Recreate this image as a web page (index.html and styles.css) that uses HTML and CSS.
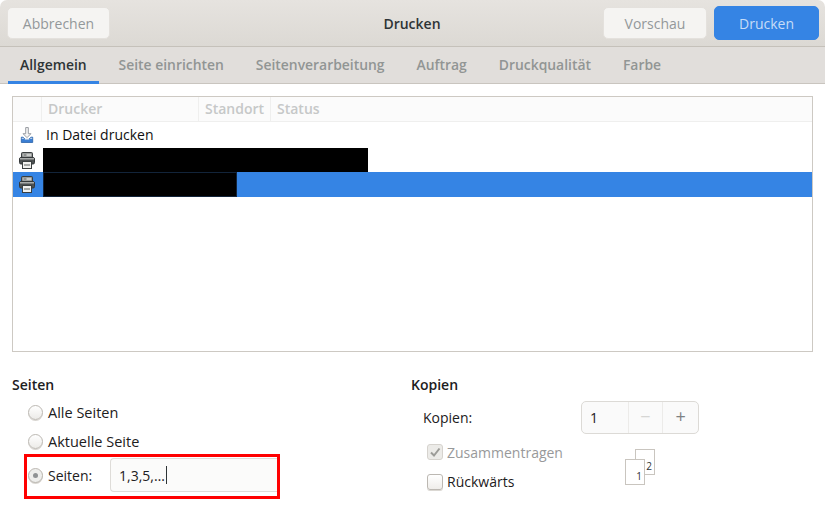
FILE: index.html
```html
<!DOCTYPE html>
<html lang="de">
<head>
<meta charset="utf-8">
<title>Drucken</title>
<link rel="stylesheet" href="styles.css">
</head>
<body>
<div class="window">
  <header class="header">
    <div class="header-left"><button class="btn btn-cancel">Abbrechen</button></div>
    <div class="title">Drucken</div>
    <div class="header-right">
      <button class="btn btn-preview">Vorschau</button>
      <button class="btn btn-print">Drucken</button>
    </div>
  </header>
  <nav class="tabs">
    <div class="tab active">Allgemein</div>
    <div class="tab">Seite einrichten</div>
    <div class="tab">Seitenverarbeitung</div>
    <div class="tab">Auftrag</div>
    <div class="tab">Druckqualität</div>
    <div class="tab">Farbe</div>
  </nav>
  <main class="content">
    <section class="list">
      <div class="list-head">
        <div class="col col-icon"></div>
        <div class="col col-name">Drucker</div>
        <div class="col col-loc">Standort</div>
        <div class="col col-status">Status</div>
      </div>
      <div class="row row-file">
        <div class="cell-icon">
          <svg width="14" height="16" viewBox="0 0 16 18">
            <path d="M6.500 0.500h3v7H12.500L8 12 3.500 7.500H6.500z" fill="#f6f6f6" stroke="#8b9097" stroke-width="1"/>
            <path d="M1.500 11.500h2L6 14h4l2.500-2.500h2V17.500h-13z" fill="#3b7fd4" stroke="#2f67ad" stroke-width="1"/>
            <path d="M2 12h1.500L6 14.500h4L12.500 12H14v1.500H2z" fill="#b9cfe9"/>
          </svg>
        </div>
        <div class="cell-text">In Datei drucken</div>
      </div>
      <div class="row row-printer">
        <div class="cell-icon">
          <svg width="16" height="17" viewBox="0 0 16 17">
            <rect x="2.500" y="0.500" width="11" height="6" rx="1" fill="#6e7273" stroke="#3a3f40"/>
            <rect x="3.500" y="1.500" width="9" height="3" fill="#c9cbc9"/>
            <rect x="4.500" y="2.500" width="3" height="1" fill="#55595a"/>
            <rect x="0.500" y="5.500" width="15" height="6.500" rx="1.500" fill="#4c5051" stroke="#34383a"/>
            <rect x="1" y="6" width="14" height="1.500" fill="#a9acab"/>
            <rect x="3.500" y="9.500" width="9" height="7" fill="#f1f1ef" stroke="#3a3f40"/>
            <rect x="5" y="12" width="6" height="2" fill="#a5a8a6"/>
          </svg>
        </div>
        <div class="redacted redacted-long"></div>
      </div>
      <div class="row row-selected">
        <div class="cell-icon">
          <svg width="16" height="17" viewBox="0 0 16 17">
            <rect x="2.500" y="0.500" width="11" height="6" rx="1" fill="#6e7273" stroke="#3a3f40"/>
            <rect x="3.500" y="1.500" width="9" height="3" fill="#c9cbc9"/>
            <rect x="4.500" y="2.500" width="3" height="1" fill="#55595a"/>
            <rect x="0.500" y="5.500" width="15" height="6.500" rx="1.500" fill="#4c5051" stroke="#34383a"/>
            <rect x="1" y="6" width="14" height="1.500" fill="#a9acab"/>
            <rect x="3.500" y="9.500" width="9" height="7" fill="#f1f1ef" stroke="#3a3f40"/>
            <rect x="5" y="12" width="6" height="2" fill="#a5a8a6"/>
          </svg>
        </div>
        <div class="redacted redacted-short"></div>
      </div>
    </section>
    <section class="options">
      <div class="pages">
        <h2 class="group-title">Seiten</h2>
        <div class="option option-first"><span class="radio"></span><span>Alle Seiten</span></div>
        <div class="option option-last"><span class="radio"></span><span>Aktuelle Seite</span></div>
        <div class="option-range">
          <span class="radio radio-on"></span>
          <span class="range-label">Seiten:</span>
          <div class="range-input"><span>1,3,5,…</span><span class="caret"></span></div>
        </div>
      </div>
      <div class="copies">
        <h2 class="group-title">Kopien</h2>
        <div class="copies-row">
          <span>Kopien:</span>
          <div class="spin">
            <div class="spin-value">1</div>
            <div class="spin-btn spin-minus">−</div>
            <div class="spin-btn">+</div>
          </div>
        </div>
        <div class="collate">
          <div class="checks">
            <div class="check-row check-disabled"><span class="check check-on">
              <svg width="12" height="12" viewBox="0 0 12 12"><path d="M2 6.500 5 9.500 10.500 2.500" fill="none" stroke="#9c9c98" stroke-width="2"/></svg>
            </span><span>Zusammentragen</span></div>
            <div class="check-row"><span class="check"></span><span>Rückwärts</span></div>
          </div>
          <div class="sheets">
            <div class="sheet sheet-back">2</div>
            <div class="sheet sheet-front">1</div>
          </div>
        </div>
      </div>
    </section>
  </main>
</div>
</body>
</html>
```
FILE: styles.css
```css
* { box-sizing: border-box; }
html, body { margin: 0; padding: 0; background: #fff; }
body { width: 825px; height: 505px; overflow: hidden; font-family: "Open Sans", "Noto Sans", sans-serif; font-size: 14px; color: #2e3436; }
.window { width: 825px; height: 505px; display: flex; flex-direction: column; }

.header { height: 47px; flex: none; display: grid; grid-template-columns: 1fr auto 1fr; align-items: center; padding: 0 6px 0 7px; background: linear-gradient(#e6e3df, #dcd9d4); border-bottom: 1px solid #c5c1ba; border-radius: 7px 7px 0 0; }
.btn { font: inherit; font-size: 14px; height: 32px; border: 1px solid #e4e1dd; border-radius: 5px; background: #f5f4f2; color: #93989a; padding: 0; }
.btn-cancel { width: 103px; display: block; }
.title { text-align: center; font-weight: 600; font-size: 14px; color: #2e3436; padding-right: 2px; }
.header-right { display: flex; align-items: center; justify-content: flex-end; gap: 7px; }
.btn-preview { width: 104px; }
.btn-print { width: 105px; height: 34px; background: #3584e4; border-color: #3584e4; color: #c6dcf7; }

.tabs { height: 37px; flex: none; display: flex; gap: 8px; padding-left: 8px; background: #e1dedb; border-bottom: 1px solid #c9c5bf; }
.tab { padding: 0 12px; line-height: 36px; height: 37px; font-weight: 600; font-size: 13.9px; color: #919594; margin-bottom: -1px; white-space: nowrap; }
.tab.active { color: #2e3436; border-bottom: 3px solid #3584e4; }

.content { flex: 1; padding: 12px 12px 0; display: flex; flex-direction: column; background: #fff; }
.list { height: 256px; flex: none; border: 1px solid #cdc9c3; background: #fff; }
.list-head { height: 25px; display: flex; background: #fbfbfb; border-bottom: 1px solid #efefee; font-weight: 600; color: #c6c8c8; font-size: 14px; line-height: 24px; }
.col { height: 24px; padding-left: 6px; border-right: 1px solid #efefee; white-space: nowrap; }
.col-icon { width: 29px; }
.col-name { width: 157px; }
.col-loc { width: 72px; }
.col-status { border-right: 0; }
.row { display: flex; align-items: center; height: 25px; }
.row-file { height: 26px; color: #111; line-height: 25px; }
.row-printer { height: 24px; }
.cell-icon { width: 29px; height: 100%; flex: none; display: flex; align-items: center; justify-content: center; padding-right: 1px; }
.cell-text { padding-left: 4px; margin-top: -2px; }
.row-selected { background: #3584e4; }
.redacted { height: 100%; background: #000; margin-left: 1px; }
.redacted-long { width: 325px; }
.redacted-short { width: 194px; border: 1px solid #12243a; }

.options { display: flex; padding-top: 23px; }
.pages { width: 399px; flex: none; }
.copies { flex: 1; }
.group-title { margin: 0; font-size: 14px; font-weight: 600; color: #1d2021; line-height: 20px; }
.option { display: flex; align-items: center; gap: 5px; height: 29px; padding-left: 16px; color: #1d2021; font-size: 14.5px; }
.option-first { margin-top: 3px; }
.option-last { margin-bottom: -2px; }
.radio { width: 15px; height: 15px; flex: none; border-radius: 50%; border: 1px solid #bcb8b2; background: linear-gradient(#fff, #ecebe8); box-shadow: 0 1px 0 #d8d5d0; position: relative; }
.radio-on { background: #eeeeec; }
.radio-on::after { content: ""; position: absolute; left: 4px; top: 4px; width: 5px; height: 5px; border-radius: 50%; background: #8f9294; }
.option-range { margin: 0 0 0 12px; width: 256px; height: 45px; border: 3px solid #f00; display: flex; align-items: center; padding: 1px 0 4px 1px; color: #1d2021; }
.range-label { margin-left: 5px; width: 62px; }
.range-input { flex: 1; height: 34px; border: 1px solid #dedcd8; border-right: 0; border-radius: 4px 0 0 4px; background: #fbfbfa; padding-left: 8px; display: flex; align-items: center; }
.caret { display: inline-block; width: 1px; height: 18px; background: #2e3436; margin-left: 1px; }

.copies-row { display: flex; align-items: center; height: 33px; margin-top: 6px; padding-left: 12px; color: #1d2021; }
.copies-row > span { width: 158px; }
.spin { width: 118px; height: 33px; display: flex; border: 1px solid #dcdad6; border-radius: 5px; background: #fafafa; }
.spin-value { width: 47px; padding-left: 8px; line-height: 31px; border-right: 1px solid #ecebe9; }
.spin-btn { width: 35px; text-align: center; font-size: 18px; line-height: 29px; color: #7d8183; }
.spin-minus { color: #d6d6d4; border-right: 1px solid #ecebe9; }

.collate { display: flex; padding-top: 6px; padding-left: 16px; }
.checks { width: 198px; }
.check-row { display: flex; align-items: center; gap: 4px; height: 29px; color: #1d2021; }
.check-disabled { color: #98999a; height: 24px; margin-bottom: 3px; }
.check { width: 16px; height: 16px; flex: none; display: flex; align-items: center; justify-content: center; border: 1px solid #bcb8b2; border-radius: 3px; background: linear-gradient(#fff, #efedea); box-shadow: 0 1px 0 #dbd8d3; }
.check-on { background: #ecebe8; border-color: #d6d3ce; box-shadow: none; }
.sheets { position: relative; width: 30px; height: 36px; margin-top: 9px; }
.sheet { position: absolute; width: 20px; height: 26px; border: 1px solid #c9c5bf; background: #fff; font-size: 10px; line-height: 10px; color: #2e3436; text-align: right; padding: 11px 2px 0 0; }
.sheet-back { left: 10px; top: 0; }
.sheet-front { left: 0; top: 10px; }
```
